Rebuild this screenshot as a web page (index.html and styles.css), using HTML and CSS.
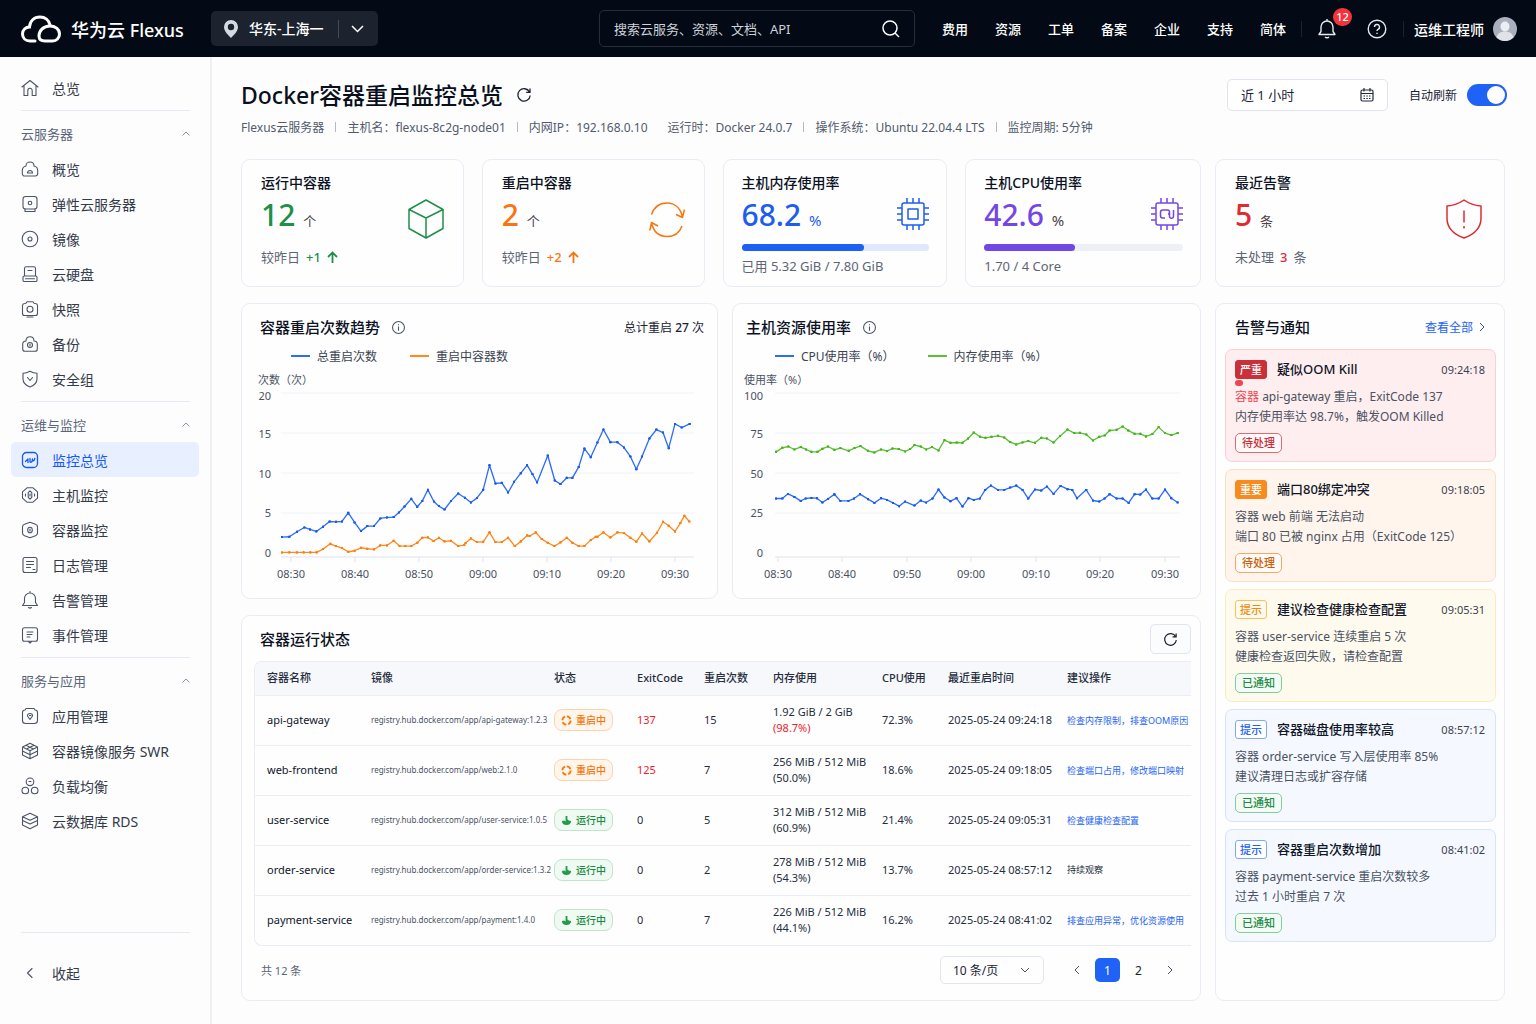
FILE: index.html
```html
<!DOCTYPE html>
<html lang="zh-CN">
<head>
    <meta charset="UTF-8">
    <meta name="viewport" content="width=device-width, initial-scale=1.0">
    <title>Docker容器重启监控总览 - 华为云 Flexus</title>
    <link rel="stylesheet" href="styles.css">
</head>
<body>
    <header class="topbar">
        <a class="brand" href="#">
            <svg width="40" height="28" viewBox="0 0 40 28" fill="none" stroke="#fff" stroke-width="3" stroke-linecap="round">
                <path d="M14 26H9C4.500 26 1.500 23 1.500 19s3-7 7-7C9 6 13 2 19 2c5 0 9 3 10 8"/>
                <path d="M24 26c-4 0-6-2-6-5 0-5 4-10 11-10 5 0 9.500 3 9.500 8 0 4-3 7-7 7z"/>
            </svg>
            <span>华为云 Flexus</span>
        </a>

        <div class="region">
            <svg width="14" height="18" viewBox="0 0 14 18"><path fill="#d5d9e2" fill-rule="evenodd" d="M7 0a7 7 0 0 1 7 7c0 4-4 8-7 11C4 15 0 11 0 7a7 7 0 0 1 7-7zm0 3.800a3.200 3.200 0 1 0 0 6.400 3.200 3.200 0 0 0 0-6.400z"/></svg>
            <select aria-label="区域">
                <option>华东-上海一</option>
            </select>
            <span class="region-line"></span>
            <svg width="13" height="8" viewBox="0 0 13 8" fill="none" stroke="#fff" stroke-width="1.500"><path d="M1 1l5.500 5.500L12 1"/></svg>
        </div>

        <div class="search">
            <input type="text" placeholder="搜索云服务、资源、文档、API" aria-label="搜索">
            <button type="button" aria-label="搜索">
                <svg width="18" height="18" viewBox="0 0 18 18" fill="none" stroke="#fff" stroke-width="1.500"><circle cx="8" cy="8" r="7"/><path d="M13 13l4 4"/></svg>
            </button>
        </div>

        <nav class="topnav">
            <a href="#">费用</a>
            <a href="#">资源</a>
            <a href="#">工单</a>
            <a href="#">备案</a>
            <a href="#">企业</a>
            <a href="#">支持</a>
            <a href="#">简体</a>
        </nav>

        <span class="top-line"></span>
        <button class="icon-btn bell" type="button" aria-label="消息">
            <svg width="18" height="20" viewBox="0 0 18 20" fill="none" stroke="#e6e8ee" stroke-width="1.400" stroke-linejoin="round"><path d="M1 15.500l2-3V8a6 6 0 0 1 12 0v4.500l2 3zM7 18c1 1 3 1 4 0M9 0v2"/></svg>
            <span class="count">12</span>
        </button>
        <button class="icon-btn help" type="button" aria-label="帮助">
            <svg width="20" height="20" viewBox="0 0 20 20" fill="none" stroke="#e6e8ee" stroke-width="1.400"><circle cx="10" cy="10" r="8.800"/><path d="M7.500 8a2.500 2.500 0 1 1 3.500 2.300c-.7.300-1 .7-1 1.700"/><path d="M10 13.800v1.300"/></svg>
        </button>
        <span class="top-line"></span>
        <a class="user" href="#">
            运维工程师
            <svg width="24" height="24" viewBox="0 0 24 24"><circle cx="12" cy="12" r="12" fill="#a9afbd"/><ellipse cx="12" cy="9.500" rx="4.500" ry="5" fill="#eceef3"/><path d="M3.500 20.500c1-4 4-6 8.500-6s7.500 2 8.500 6A12 12 0 0 1 12 24a12 12 0 0 1-8.500-3.500z" fill="#dfe2e9"/></svg>
        </a>
    </header>

    <div class="layout">
        <aside class="sidebar">
            <a class="item" href="#">
                <svg viewBox="0 0 18 18"><path d="M1 8l8-6.500L17 8M3 6.800V16.500h3.800v-5a2.200 2.200 0 0 1 4.400 0v5H15V6.800"/></svg>
                总览
            </a>
            <hr>
            <button class="group" type="button">云服务器 <svg viewBox="0 0 8 5"><path d="M.5 4.500L4 1l3.500 3.500"/></svg></button>
            <a class="item" href="#">
                <svg viewBox="0 0 18 18"><path d="M5 6c0-2.500 1.700-4 4-4s4 1.500 4 4c2.500.5 3.700 2 3.700 4.500v3c0 1.500-1 2.500-2.500 2.500H3.800c-1.500 0-2.500-1-2.500-2.500v-3C1.300 8 2.500 6.500 5 6zM6.500 13a2.500 2.500 0 1 1 5 0z"/></svg>
                概览
            </a>
            <a class="item" href="#">
                <svg viewBox="0 0 18 18"><rect x="2" y="1.500" width="14" height="12.500" rx="2.500"/><circle cx="9" cy="8" r="1.800"/><path d="M4 14v2.500h10V14"/></svg>
                弹性云服务器
            </a>
            <a class="item" href="#">
                <svg viewBox="0 0 18 18"><circle cx="9" cy="9" r="7.800"/><circle cx="9" cy="9" r="2"/></svg>
                镜像
            </a>
            <a class="item" href="#">
                <svg viewBox="0 0 18 18"><path d="M3.500 11V3.500c0-1 .6-1.700 1.700-1.700h7.600c1.100 0 1.700.7 1.700 1.700V11M2 12.300c0-.8.500-1.300 1.300-1.300h11.400c.8 0 1.300.5 1.300 1.300v2.900c0 .8-.5 1.300-1.300 1.300H3.300c-.8 0-1.300-.5-1.300-1.300zM7 5.500h4M4.500 13.800h9"/></svg>
                云硬盘
            </a>
            <a class="item" href="#">
                <svg viewBox="0 0 18 18"><path d="M1.500 5.500c0-1.200.7-1.800 2-2l1.500-.3 1-1.400h6l1 1.400 1.500.3c1.300.2 2 .8 2 2v8c0 1.300-.8 2-2 2h-11c-1.200 0-2-.7-2-2zM6 17h6"/><circle cx="9" cy="9.300" r="3"/></svg>
                快照
            </a>
            <a class="item" href="#">
                <svg viewBox="0 0 18 18"><path d="M5 6c0-2.700 1.700-4.300 4-4.300s4 1.600 4 4.300c2 .2 3.300 1.200 3.300 3v5c0 1.500-.8 2.300-2.300 2.300H4c-1.500 0-2.300-.8-2.300-2.300V9C1.700 7.200 3 6.200 5 6z"/><circle cx="9" cy="10" r="2.500"/><path d="M9 9v2"/></svg>
                备份
            </a>
            <a class="item" href="#">
                <svg viewBox="0 0 18 18"><path d="M9 1.300c2.500 1.400 4.700 2 7 2V9c0 4-3 6.500-7 8-4-1.500-7-4-7-8V3.300c2.300 0 4.500-.6 7-2zM6.500 7.500L9 10.500l2.500-3"/></svg>
                安全组
            </a>
            <hr>
            <button class="group" type="button">运维与监控 <svg viewBox="0 0 8 5"><path d="M.5 4.500L4 1l3.500 3.500"/></svg></button>
            <a class="item active" href="#">
                <svg viewBox="0 0 18 18"><rect x="1.500" y="1.500" width="15" height="15" rx="4"/><path d="M4.500 10.500L7 8v3.500M9 11V7.500M9 11c1.500.8 2.500-.5 2.300-2.500M11.500 8c0 3 1.800 2 2.300-.5"/></svg>
                监控总览
            </a>
            <a class="item" href="#">
                <svg viewBox="0 0 18 18"><path d="M6 1.800h6l4.500 4v6.400l-4.500 4H6l-4.500-4V5.800z"/><path d="M9 4.800l1.800 1.900v4.600L9 13.200l-1.800-1.900V6.700zM4.500 8v2M13.500 8v2M9 8v2"/></svg>
                主机监控
            </a>
            <a class="item" href="#">
                <svg viewBox="0 0 18 18"><path d="M9 1.300l5.500 2c1.500.5 2 1.200 2 2.700v6c0 1.500-.5 2.200-2 2.700L9 16.700l-5.500-2c-1.500-.5-2-1.200-2-2.700V6c0-1.500.5-2.200 2-2.700z"/><ellipse cx="9" cy="9" rx="2.300" ry="2.800"/><path d="M9 8v2"/></svg>
                容器监控
            </a>
            <a class="item" href="#">
                <svg viewBox="0 0 18 18"><rect x="2" y="1.500" width="14" height="15" rx="2"/><path d="M5.500 5.500h7M5.500 8.500h7M5.500 11.500h4M12 13.500h2"/></svg>
                日志管理
            </a>
            <a class="item" href="#">
                <svg viewBox="0 0 18 18"><path d="M1.500 14.500l2-3V7.500a5.500 5.500 0 0 1 11 0v4l2 3zM7.500 16.500c1 .8 2 .8 3 0M9 .5V2"/></svg>
                告警管理
            </a>
            <a class="item" href="#">
                <svg viewBox="0 0 18 18"><rect x="1.500" y="1.800" width="15" height="13.500" rx="2"/><path d="M6 6h6M6 8.500h5M6 11h3M7.500 15.500L9 17l1.500-1.500"/></svg>
                事件管理
            </a>
            <hr>
            <button class="group" type="button">服务与应用 <svg viewBox="0 0 8 5"><path d="M.5 4.500L4 1l3.500 3.500"/></svg></button>
            <a class="item" href="#">
                <svg viewBox="0 0 18 18"><path d="M5 1.500h8l1 1.500c1.700 0 2.500.8 2.500 2.500v8c0 2-1 3-3 3h-9c-2 0-3-1-3-3v-8C1.500 3.800 2.300 3 4 3z"/><path d="M9 12.500L6.500 9c-.3-1.700 1-2.500 2.500-2.500s2.800.8 2.500 2.500zM8.500 8.500h1.500"/></svg>
                应用管理
            </a>
            <a class="item" href="#">
                <svg viewBox="0 0 18 18"><path d="M9 1.300l7.500 3.700v8L9 16.700 1.500 13V5zM1.500 5L9 8.700 16.500 5M9 8.700v8M1.500 9L9 12.700 16.500 9M5 3.200l7.500 3.700M13 3.200L5.500 6.900"/></svg>
                容器镜像服务 SWR
            </a>
            <a class="item" href="#">
                <svg viewBox="0 0 18 18"><circle cx="9" cy="4.800" r="3.800"/><circle cx="4.300" cy="13.500" r="3.300"/><circle cx="13.700" cy="13.500" r="3.300"/><path d="M8 4.500h2"/></svg>
                负载均衡
            </a>
            <a class="item" href="#">
                <svg viewBox="0 0 18 18"><path d="M9 1.300l7.500 3.500L9 8.300 1.500 4.800zM1.500 4.800v3.700L9 12l7.500-3.500V4.800M1.500 9v4L9 16.700l7.500-3.700V9"/></svg>
                云数据库 RDS
            </a>
            <hr class="last">
            <button class="item collapse" type="button">
                <svg viewBox="0 0 18 18"><path d="M11 4.500L6.500 9l4.500 4.500"/></svg>
                收起
            </button>
        </aside>

        <main class="content">
            <div class="page-head">
                <h1>Docker容器重启监控总览</h1>
                <button class="icon-btn refresh" type="button" aria-label="刷新">
                    <svg width="16" height="16" viewBox="0 0 16 16"><path d="M13.500 5A6.200 6.200 0 1 0 14.200 8.500M14 1.500V5.300h-3.800"/></svg>
                </button>
                <div class="range">
                    <select aria-label="时间范围">
                        <option>近 1 小时</option>
                    </select>
                    <svg width="14" height="14" viewBox="0 0 14 14" fill="none" stroke="#222b3a" stroke-width="1.200"><rect x="1" y="2" width="12" height="11" rx="1.500"/><path d="M1 5.500h12M4 0v3.500M10 0v3.500M3.500 8h1.500M6.300 8h1.500M9 8h1.500M3.500 10.500h1.500M6.300 10.500h1.500M9 10.500h1.500"/></svg>
                </div>
                <label class="auto" for="autoRefresh">自动刷新</label>
                <input class="switch" type="checkbox" id="autoRefresh" checked>
            </div>

            <ul class="meta">
                <li>Flexus云服务器</li>
                <li>主机名：flexus-8c2g-node01</li>
                <li>内网IP：192.168.0.10</li>
                <li class="plain">运行时：Docker 24.0.7</li>
                <li>操作系统：Ubuntu 22.04.4 LTS</li>
                <li>监控周期: 5分钟</li>
            </ul>

            <div class="dashboard">
                <div class="left">
                    <div class="stats">
                        <section class="card stat green">
                            <h3>运行中容器</h3>
                            <p class="value">12 <small>个</small></p>
                            <p class="sub">较昨日 <b>+1</b> <svg width="11" height="12" viewBox="0 0 11 12"><path d="M5.500 12V1.500M1 6l4.500-4.500L10 6"/></svg></p>
                            <svg class="stat-icon" width="36" height="40" viewBox="0 0 36 40"><path d="M18 1l17 9.500v19L18 39 1 29.500v-19zM1 10.500L18 19l17-8.500M18 19v20"/></svg>
                        </section>
                        <section class="card stat orange">
                            <h3>重启中容器</h3>
                            <p class="value">2 <small>个</small></p>
                            <p class="sub">较昨日 <b>+2</b> <svg width="11" height="12" viewBox="0 0 11 12"><path d="M5.500 12V1.500M1 6l4.500-4.500L10 6"/></svg></p>
                            <svg class="stat-icon" width="36" height="40" viewBox="0 0 36 40"><path d="M2.500 15.500C5 8 11 4 18 4c7.500 0 13.500 5 15.500 14M27 15.500l6.500 3 2-8M33 27c-2.500 7-8 10.500-15 10.500C10 37.500 4.500 32.500 2.500 24M9 27l-6.500-3.500L.8 31.500"/></svg>
                        </section>
                        <section class="card stat blue has-bar">
                            <h3>主机内存使用率</h3>
                            <p class="value">68.2 <small>%</small></p>
                            <div class="bar"><div class="fill" style="width: 65.5%"></div></div>
                            <p class="sub">已用 5.32 GiB / 7.80 GiB</p>
                            <svg class="stat-icon" width="32" height="32" viewBox="0 0 32 32"><rect x="5" y="5" width="22" height="22" rx="2"/><rect x="11" y="11" width="10" height="10"/><path d="M10 5V0M16 5V0M22 5V0M10 32v-5M16 32v-5M22 32v-5M5 10H0M5 16H0M5 22H0M32 10h-5M32 16h-5M32 22h-5"/></svg>
                        </section>
                        <section class="card stat purple has-bar">
                            <h3>主机CPU使用率</h3>
                            <p class="value">42.6 <small>%</small></p>
                            <div class="bar"><div class="fill" style="width: 45.5%"></div></div>
                            <p class="sub">1.70 / 4 Core</p>
                            <svg class="stat-icon" width="32" height="32" viewBox="0 0 32 32"><rect x="5" y="5" width="22" height="22" rx="2"/><path d="M10 5V0M16 5V0M22 5V0M10 32v-5M16 32v-5M22 32v-5M5 10H0M5 16H0M5 22H0M32 10h-5M32 16h-5M32 22h-5"/><path d="M14 12h-2.500c-1.500 0-2 1-2 2.500v3c0 1.500.5 2.500 2 2.500H14M14 12h2.500c1.500 0 2 1 2 2s-.5 2-1.500 2M18.500 14v4c0 1.500.8 2.300 2 2.300s2-.8 2-2.300v-6"/></svg>
                        </section>
                    </div>

                    <div class="charts">
                        <section class="card chart">
                            <div class="chart-head">
                                <h2>容器重启次数趋势</h2>
                                <svg class="info" width="13" height="13" viewBox="0 0 12 12"><circle cx="6" cy="6" r="5.500"/><path d="M6 5v4M6 3v1"/></svg>
                                <span class="total">总计重启 <b>27</b> 次</span>
                            </div>
                            <div class="legend">
                                <span class="c-blue">总重启次数</span>
                                <span class="c-orange">重启中容器数</span>
                            </div>
                            <svg class="graph" viewBox="0 0 475 228">
                                <defs>
                                    <marker id="dotBlue" viewBox="0 0 4 4" refX="2" refY="2" markerWidth="2" markerHeight="2"><circle cx="2" cy="2" r="2" fill="#1659f5"/></marker>
                                    <marker id="dotOrange" viewBox="0 0 4 4" refX="2" refY="2" markerWidth="2" markerHeight="2"><circle cx="2" cy="2" r="2" fill="#ff7f0e"/></marker>
                                    <marker id="dotGreen" viewBox="0 0 4 4" refX="2" refY="2" markerWidth="2" markerHeight="2"><circle cx="2" cy="2" r="2" fill="#46b41e"/></marker>
                                </defs>
                                <text x="16" y="14">次数（次）</text>
                                <path class="grid" d="M39 23h413M39 63h413M39 103h413M39 143h413"/>
                                <path class="axis" d="M39 187h413M49 187v5M113 187v5M177 187v5M241 187v5M305 187v5M369 187v5M433 187v5"/>
                                <g class="y-labels">
                                    <text x="29" y="30">20</text>
                                    <text x="29" y="68">15</text>
                                    <text x="29" y="108">10</text>
                                    <text x="29" y="147">5</text>
                                    <text x="29" y="187">0</text>
                                </g>
                                <g class="x-labels">
                                    <text x="49" y="208">08:30</text>
                                    <text x="113" y="208">08:40</text>
                                    <text x="177" y="208">08:50</text>
                                    <text x="241" y="208">09:00</text>
                                    <text x="305" y="208">09:10</text>
                                    <text x="369" y="208">09:20</text>
                                    <text x="433" y="208">09:30</text>
                                </g>
                                <svg x="39" y="23" width="413" height="164" viewBox="138 279 1240 491" overflow="visible">
                                    <polyline class="line s-blue" points="141,711 163,710 186,695 208,682 225,688 244,694 264,680 284,664 303,665 321,664 340,638 359,667 378,693 397,678 417,678 436,655 456,652 476,651 492,637 509,619 529,596 547,620 562,603 579,569 597,604 612,618 629,628 648,603 670,580 690,593 708,607 726,594 745,569 764,495 782,550 801,548 820,577 838,545 858,519 877,495 893,522 907,547 939,466 960,541 977,552 996,533 1013,533 1032,500 1049,445 1068,471 1088,427 1106,388 1127,426 1148,426 1168,442 1187,469 1205,507 1222,469 1244,415 1265,388 1285,397 1302,444 1321,371 1341,382 1365,371"/>
                                    <polyline class="line s-orange" points="141,757 163,757 186,757 206,757 226,757 245,757 264,747 286,731 303,738 321,744 340,755 359,752 378,743 397,746 417,748 436,736 456,736 476,722 494,738 511,738 529,738 547,728 562,713 579,712 596,723 612,713 629,724 648,722 670,738 688,735 692,729 708,715 726,726 745,725 764,697 782,726 801,726 820,713 840,738 858,724 877,706 884,708 903,697 921,717 939,728 959,738 977,727 996,713 1013,728 1032,738 1049,738 1068,720 1083,710 1088,710 1106,697 1127,712 1148,697 1168,699 1187,713 1205,725 1222,700 1244,724 1267,698 1285,665 1302,677 1321,694 1337,669 1349,647 1364,664"/>
                                </svg>
                            </svg>
                        </section>

                        <section class="card chart">
                            <div class="chart-head">
                                <h2>主机资源使用率</h2>
                                <svg class="info" width="13" height="13" viewBox="0 0 12 12"><circle cx="6" cy="6" r="5.500"/><path d="M6 5v4M6 3v1"/></svg>
                            </div>
                            <div class="legend">
                                <span class="c-blue">CPU使用率（%）</span>
                                <span class="c-green">内存使用率（%）</span>
                            </div>
                            <svg class="graph" viewBox="0 0 467 224">
                                <text x="11" y="14">使用率（%）</text>
                                <path class="grid" d="M42 23h405M42 63h405M42 103h405M42 143h405"/>
                                <path class="axis" d="M42 187h405M45 187v5M109 187v5M174 187v5M238 187v5M303 187v5M367 187v5M432 187v5"/>
                                <g class="y-labels">
                                    <text x="30" y="30">100</text>
                                    <text x="30" y="68">75</text>
                                    <text x="30" y="108">50</text>
                                    <text x="30" y="147">25</text>
                                    <text x="30" y="187">0</text>
                                </g>
                                <g class="x-labels">
                                    <text x="45" y="208">08:30</text>
                                    <text x="109" y="208">08:40</text>
                                    <text x="174" y="208">09:50</text>
                                    <text x="238" y="208">09:00</text>
                                    <text x="303" y="208">09:10</text>
                                    <text x="367" y="208">09:20</text>
                                    <text x="432" y="208">09:30</text>
                                </g>
                                <svg x="42" y="23" width="405" height="164" viewBox="150 279 1214 491" overflow="visible">
                                    <polyline class="line s-green" points="153,455 172,443 190,439 208,448 227,441 243,448 259,455 277,455 292,446 309,439 328,449 346,444 371,452 388,444 406,438 429,452 448,457 468,448 486,453 502,445 521,447 540,454 555,447 568,435 587,439 603,448 621,441 640,451 658,420 676,428 695,427 712,428 729,415 746,397 765,410 781,413 799,410 818,407 837,412 855,426 873,433 892,427 909,423 929,428 948,413 965,415 985,427 1004,408 1027,388 1047,399 1064,398 1083,403 1103,421 1122,410 1138,406 1153,391 1174,389 1192,379 1209,391 1228,401 1245,401 1262,409 1281,402 1300,381 1319,399 1338,405 1357,399"/>
                                    <polyline class="line s-blue" points="153,595 172,595 189,581 208,590 227,602 242,595 259,593 276,594 292,607 309,596 328,582 346,602 370,602 387,595 405,582 429,597 448,608 468,594 486,599 504,608 522,618 540,604 568,616 587,601 603,607 622,595 640,568 658,592 676,603 694,594 712,619 730,594 746,599 764,595 780,569 797,556 818,569 837,569 855,562 873,556 892,569 909,595 929,568 948,571 965,559 985,581 1006,557 1027,567 1041,569 1055,594 1083,569 1103,601 1122,604 1138,595 1153,582 1174,595 1192,595 1210,608 1228,582 1245,583 1262,568 1281,595 1300,595 1319,568 1338,594 1357,607"/>
                                </svg>
                            </svg>
                        </section>
                    </div>

                    <section class="card containers">
                        <div class="table-head">
                            <h2>容器运行状态</h2>
                            <button class="box-btn refresh" type="button" aria-label="刷新">
                                <svg width="15" height="15" viewBox="0 0 16 16"><path d="M13.500 5A6.200 6.200 0 1 0 14.200 8.500M14 1.500V5.300h-3.800"/></svg>
                            </button>
                        </div>
                        <div class="table-wrap">
                            <table>
                                <thead>
                                    <tr>
                                        <th class="w-name">容器名称</th>
                                        <th>镜像</th>
                                        <th class="w-state">状态</th>
                                        <th class="w-exit">ExitCode</th>
                                        <th class="w-times">重启次数</th>
                                        <th class="w-mem">内存使用</th>
                                        <th class="w-cpu">CPU使用</th>
                                        <th class="w-last">最近重启时间</th>
                                        <th class="w-action">建议操作</th>
                                    </tr>
                                </thead>
                                <tbody>
                                    <tr>
                                        <td class="name">api-gateway</td>
                                        <td class="image">registry.hub.docker.com/app/api-gateway:1.2.3</td>
                                        <td><span class="state restarting"><svg width="11" height="11" viewBox="0 0 12 12"><circle cx="6" cy="6" r="4.500"/></svg>重启中</span></td>
                                        <td class="red">137</td>
                                        <td>15</td>
                                        <td>1.92 GiB / 2 GiB<br><span class="red">(98.7%)</span></td>
                                        <td>72.3%</td>
                                        <td>2025-05-24 09:24:18</td>
                                        <td><a href="#">检查内存限制，排查OOM原因</a></td>
                                    </tr>
                                    <tr>
                                        <td class="name">web-frontend</td>
                                        <td class="image">registry.hub.docker.com/app/web:2.1.0</td>
                                        <td><span class="state restarting"><svg width="11" height="11" viewBox="0 0 12 12"><circle cx="6" cy="6" r="4.500"/></svg>重启中</span></td>
                                        <td class="red">125</td>
                                        <td>7</td>
                                        <td>256 MiB / 512 MiB<br>(50.0%)</td>
                                        <td>18.6%</td>
                                        <td>2025-05-24 09:18:05</td>
                                        <td><a href="#">检查端口占用，修改端口映射</a></td>
                                    </tr>
                                    <tr>
                                        <td class="name">user-service</td>
                                        <td class="image">registry.hub.docker.com/app/user-service:1.0.5</td>
                                        <td><span class="state running"><svg width="11" height="11" viewBox="0 0 12 12"><path d="M5 1h2v4l1.500 1 2.500.5c0 3-2 4.500-5 4.500S1 9.500 1 6.500L3.500 6 5 7z"/></svg>运行中</span></td>
                                        <td>0</td>
                                        <td>5</td>
                                        <td>312 MiB / 512 MiB<br>(60.9%)</td>
                                        <td>21.4%</td>
                                        <td>2025-05-24 09:05:31</td>
                                        <td><a href="#">检查健康检查配置</a></td>
                                    </tr>
                                    <tr>
                                        <td class="name">order-service</td>
                                        <td class="image">registry.hub.docker.com/app/order-service:1.3.2</td>
                                        <td><span class="state running"><svg width="11" height="11" viewBox="0 0 12 12"><path d="M5 1h2v4l1.500 1 2.500.5c0 3-2 4.500-5 4.500S1 9.500 1 6.500L3.500 6 5 7z"/></svg>运行中</span></td>
                                        <td>0</td>
                                        <td>2</td>
                                        <td>278 MiB / 512 MiB<br>(54.3%)</td>
                                        <td>13.7%</td>
                                        <td>2025-05-24 08:57:12</td>
                                        <td class="watch">持续观察</td>
                                    </tr>
                                    <tr>
                                        <td class="name">payment-service</td>
                                        <td class="image">registry.hub.docker.com/app/payment:1.4.0</td>
                                        <td><span class="state running"><svg width="11" height="11" viewBox="0 0 12 12"><path d="M5 1h2v4l1.500 1 2.500.5c0 3-2 4.500-5 4.500S1 9.500 1 6.500L3.500 6 5 7z"/></svg>运行中</span></td>
                                        <td>0</td>
                                        <td>7</td>
                                        <td>226 MiB / 512 MiB<br>(44.1%)</td>
                                        <td>16.2%</td>
                                        <td>2025-05-24 08:41:02</td>
                                        <td><a href="#">排查应用异常，优化资源使用</a></td>
                                    </tr>
                                </tbody>
                            </table>
                        </div>
                        <div class="pager">
                            <span class="pager-total">共 12 条</span>
                            <div class="page-size">
                                <select aria-label="每页条数">
                                    <option>10 条/页</option>
                                </select>
                                <svg width="10" height="6" viewBox="0 0 10 6"><path d="M1 1l4 4 4-4"/></svg>
                            </div>
                            <button type="button" aria-label="上一页"><svg width="6" height="10" viewBox="0 0 6 10"><path d="M5 1L1 5l4 4"/></svg></button>
                            <button class="current" type="button">1</button>
                            <button type="button">2</button>
                            <button type="button" aria-label="下一页"><svg width="6" height="10" viewBox="0 0 6 10"><path d="M1 1l4 4-4 4"/></svg></button>
                        </div>
                    </section>
                </div>

                <div class="right">
                    <section class="card stat redcard">
                        <h3>最近告警</h3>
                        <p class="value">5 <small>条</small></p>
                        <p class="sub">未处理 <b>3</b> 条</p>
                        <svg class="stat-icon" width="36" height="40" viewBox="0 0 36 40"><path d="M18 1c5 3.500 11 5.500 17 6v12c0 10-7 16.500-17 20C8 35.500 1 29 1 19V7c6-.5 12-2.500 17-6zM18 11.500v12"/><path d="M18 27v2.500"/></svg>
                    </section>

                    <section class="card alerts">
                        <div class="alerts-head">
                            <h2>告警与通知</h2>
                            <a href="#">查看全部 <svg width="6" height="10" viewBox="0 0 6 10"><path d="M1 1l4 4-4 4"/></svg></a>
                        </div>
                        <article class="alert critical">
                            <div class="alert-top"><span class="tag">严重</span><h3>疑似OOM Kill</h3><time>09:24:18</time></div>
                            <p><span class="hot">容器</span> api-gateway 重启，ExitCode 137<br>内存使用率达 98.7%，触发OOM Killed</p>
                            <span class="todo">待处理</span>
                        </article>
                        <article class="alert major">
                            <div class="alert-top"><span class="tag">重要</span><h3>端口80绑定冲突</h3><time>09:18:05</time></div>
                            <p>容器 web 前端 无法启动<br>端口 80 已被 nginx 占用（ExitCode 125）</p>
                            <span class="todo">待处理</span>
                        </article>
                        <article class="alert minor">
                            <div class="alert-top"><span class="tag">提示</span><h3>建议检查健康检查配置</h3><time>09:05:31</time></div>
                            <p>容器 user-service 连续重启 5 次<br>健康检查返回失败，请检查配置</p>
                            <span class="todo done">已通知</span>
                        </article>
                        <article class="alert notice">
                            <div class="alert-top"><span class="tag">提示</span><h3>容器磁盘使用率较高</h3><time>08:57:12</time></div>
                            <p>容器 order-service 写入层使用率 85%<br>建议清理日志或扩容存储</p>
                            <span class="todo done">已通知</span>
                        </article>
                        <article class="alert notice">
                            <div class="alert-top"><span class="tag">提示</span><h3>容器重启次数增加</h3><time>08:41:02</time></div>
                            <p>容器 payment-service 重启次数较多<br>过去 1 小时重启 7 次</p>
                            <span class="todo done">已通知</span>
                        </article>
                    </section>
                </div>
            </div>
        </main>
    </div>
</body>
</html>
```
FILE: styles.css
```css
* {
    box-sizing: border-box;
}
body {
    margin: 0;
    min-height: 100vh;
    display: flex;
    flex-direction: column;
    font-family: "Noto Sans", "Noto Sans CJK SC", sans-serif;
    font-size: 12px;
    color: #1b2333;
    background: #fdfdfe;
}
h1, h2, h3, p, ul {
    margin: 0;
    padding: 0;
}
a {
    color: inherit;
    text-decoration: none;
}
button, select, input {
    font: inherit;
    color: inherit;
}
button {
    padding: 0;
    border: none;
    background: none;
    cursor: pointer;
}
select {
    appearance: none;
    border: none;
    background: transparent;
    padding: 0;
    outline: none;
}
svg {
    display: block;
    flex: none;
}

/* top bar */
.topbar {
    height: 57px;
    display: flex;
    align-items: center;
    padding: 0 19px 0 21px;
    background: #030a15;
    color: #fff;
    font-size: 13px;
    font-weight: 500;
}
.brand {
    display: flex;
    align-items: center;
    gap: 10px;
    width: 190px;
    font-size: 18px;
    white-space: nowrap;
}
.region {
    display: flex;
    align-items: center;
    width: 167px;
    height: 35px;
    padding: 0 14px 0 13px;
    border-radius: 5px;
    background: #1c232f;
    font-size: 14px;
}
.region select {
    flex: 1;
    min-width: 0;
    margin-left: 11px;
}
.region option {
    color: #1b2333;
}
.region-line {
    width: 1px;
    height: 18px;
    margin-right: 12px;
    background: #444b57;
}
.search {
    display: flex;
    align-items: center;
    width: 316px;
    height: 37px;
    margin-left: auto;
    padding: 0 14px;
    border: 1px solid #262e3a;
    border-radius: 5px;
    font-weight: 400;
}
.search input {
    flex: 1;
    min-width: 0;
    padding: 0;
    border: none;
    outline: none;
    background: transparent;
}
.search input::placeholder {
    color: #ccd1da;
    opacity: 1;
}
.topnav {
    display: flex;
    gap: 27px;
    margin: 0 15px 0 27px;
}
.top-line {
    width: 1px;
    height: 16px;
    background: #1b2330;
}
.bell {
    position: relative;
    margin: 0 31px 0 16px;
}
.count {
    position: absolute;
    top: -11px;
    left: 15px;
    width: 19px;
    border-radius: 9px;
    background: #f5333a;
    font-size: 11px;
    line-height: 18px;
    text-align: center;
}
.help {
    margin-right: 16px;
}
.user {
    display: flex;
    align-items: center;
    gap: 9px;
    margin-left: 10px;
    font-size: 14px;
}

/* sidebar */
.layout {
    flex: 1;
    display: flex;
}
.sidebar {
    width: 212px;
    flex: none;
    display: flex;
    flex-direction: column;
    padding: 13px 11px 34px 11px;
    border-right: 2px solid #edf0f6;
}
.item {
    display: flex;
    align-items: center;
    gap: 13px;
    height: 35px;
    padding-left: 10px;
    border-radius: 5px;
    font-size: 14px;
    color: #333a48;
}
.item svg {
    width: 18px;
    height: 18px;
    fill: none;
    stroke: #4c5464;
    stroke-width: 1.1;
    stroke-linecap: round;
    stroke-linejoin: round;
}
.item.active {
    background: #e8effe;
    color: #1659f5;
}
.item.active svg {
    stroke: #1659f5;
    stroke-width: 1.3;
}
.sidebar hr {
    width: 169px;
    margin: 5px 10px;
    border: none;
    border-top: 1px solid #e5e9f2;
}
.sidebar hr.last {
    margin-top: auto;
    margin-bottom: 22px;
}
.group {
    display: flex;
    align-items: center;
    justify-content: space-between;
    height: 35px;
    padding: 0 9px 0 10px;
    font-size: 13px;
    color: #5b6578;
}
.group svg {
    width: 8px;
    height: 5px;
    fill: none;
    stroke: #8a93a5;
}

/* page head */
.content {
    flex: 1;
    min-width: 0;
    display: flex;
    flex-direction: column;
    padding: 21px 29px 23px;
}
.page-head {
    display: flex;
    align-items: center;
    height: 34px;
}
h1 {
    margin-right: 13px;
    font-size: 23px;
    font-weight: 500;
    line-height: 34px;
    color: #0a0f1c;
}
.refresh svg {
    fill: none;
    stroke: #1b2333;
    stroke-width: 1.3;
}
.range {
    display: flex;
    align-items: center;
    width: 161px;
    height: 32px;
    margin-left: auto;
    padding: 0 13px;
    border: 1px solid #dfe4ee;
    border-radius: 5px;
    background: #fff;
}
.range select {
    flex: 1;
    font-size: 13px;
}
.auto {
    margin: 0 10px 0 21px;
}
.switch {
    appearance: none;
    width: 40px;
    height: 22px;
    margin: 0;
    padding: 2px;
    border-radius: 11px;
    background: #1f62f6;
    display: flex;
    justify-content: flex-end;
}
.switch::before {
    content: "";
    width: 18px;
    height: 18px;
    border-radius: 50%;
    background: #fff;
}
.switch:not(:checked) {
    justify-content: flex-start;
    background: #b8bfcc;
}
.meta {
    display: flex;
    margin-top: 6px;
    list-style: none;
    line-height: 20px;
    color: #525b6b;
    white-space: nowrap;
}
.meta li + li::before {
    content: "";
    display: inline-block;
    width: 1px;
    height: 10px;
    margin: 0 11px;
    background: #b3bac7;
}
.meta li.plain::before {
    width: 0;
    margin: 0 10px;
}

/* cards */
.dashboard {
    flex: 1;
    display: flex;
    gap: 14px;
    margin: 21px 2px 0 0;
}
.left {
    flex: 1;
    min-width: 0;
    display: flex;
    flex-direction: column;
    gap: 16px;
}
.right {
    width: 290px;
    flex: none;
    display: flex;
    flex-direction: column;
    gap: 16px;
}
.card {
    border: 1px solid #e9ecf3;
    border-radius: 9px;
    background: #fefeff;
}
h2 {
    font-size: 15px;
    font-weight: 500;
    line-height: 24px;
    color: #0c121f;
}
.stats {
    display: grid;
    grid-template-columns: 223fr 223fr 225fr 236fr;
    gap: 18px;
}
.stat {
    height: 128px;
    display: grid;
    grid-template-columns: 1fr auto;
    grid-template-rows: 20px 44px 1fr;
    padding: 13px 19px 0 19px;
}
.stat h3 {
    grid-column: 1 / 3;
    font-size: 14px;
    font-weight: 500;
    line-height: 20px;
    color: #0c121f;
}
.value {
    font-size: 30px;
    font-weight: 500;
    line-height: 44px;
    white-space: nowrap;
}
.value small {
    font-size: 13px;
    font-weight: 400;
    color: #4c4248;
}
.sub {
    grid-column: 1;
    align-self: start;
    display: flex;
    align-items: center;
    gap: 6px;
    margin-top: 10px;
    font-size: 13px;
    line-height: 20px;
    color: #5d6575;
}
.sub b {
    font-weight: 500;
}
.sub svg {
    fill: none;
    stroke-width: 1.8;
}
.stat-icon {
    grid-column: 2;
    grid-row: 2 / 4;
    margin-top: 6px;
    fill: none;
    stroke-width: 1.5;
    stroke-linejoin: round;
}
.has-bar {
    grid-template-rows: 20px 44px 14px 1fr;
    padding: 13px 17px 0 18px;
}
.has-bar .value small {
    font-size: 15px;
}
.has-bar .stat-icon {
    grid-row: 2;
    margin-top: 5px;
}
.has-bar .sub {
    grid-column: 1 / 3;
    margin-top: 5px;
}
.bar {
    grid-column: 1 / 3;
    align-self: end;
    height: 7px;
    border-radius: 4px;
    background: #dfe8fd;
}
.fill {
    height: 7px;
    border-radius: 4px;
    background: #1c60f5;
}
.purple .bar {
    background: #efeff6;
}
.purple .fill {
    background: #7347e3;
}
.green .value, .green b {
    color: #1f8f48;
}
.green svg {
    stroke: #1f8f48;
}
.orange .value, .orange b {
    color: #f9760e;
}
.orange svg {
    stroke: #f9760e;
}
.blue .value, .blue .value small {
    color: #1c5df0;
}
.blue svg {
    stroke: #1c5df0;
}
.purple .value {
    color: #7347e3;
}
.purple svg {
    stroke: #7347e3;
}
.redcard {
    padding-right: 22px;
}
.redcard .value, .redcard b {
    color: #e02b33;
}
.redcard svg {
    stroke: #e02b33;
}

/* charts */
.charts {
    display: grid;
    grid-template-columns: 477fr 469fr;
    gap: 14px;
}
.chart-head {
    display: flex;
    align-items: center;
    padding: 11px 13px 0 18px;
}
.info {
    margin-left: 12px;
    fill: none;
    stroke: #4c5464;
}
.total {
    margin-left: auto;
}
.total b {
    font-weight: 500;
}
.legend {
    display: flex;
    gap: 33px;
    height: 31px;
    padding-left: 49px;
    line-height: 36px;
    color: #3b4352;
}
.chart + .chart .chart-head {
    padding-left: 13px;
}
.chart + .chart .legend {
    padding-left: 42px;
}
.legend span::before {
    content: "";
    display: inline-block;
    width: 19px;
    height: 2px;
    margin-right: 7px;
    vertical-align: 4px;
    background: #2f6df7;
}
.legend .c-orange::before {
    background: #ff8a1f;
}
.legend .c-green::before {
    background: #5bbf35;
}
.graph {
    width: 100%;
    font-size: 11px;
    fill: #4a5262;
}
.grid, .axis {
    fill: none;
    stroke: #f0f2f6;
}
.axis {
    stroke: #dfe3ea;
}
.y-labels {
    text-anchor: end;
}
.x-labels {
    text-anchor: middle;
}
.line {
    fill: none;
    stroke-width: 4;
    stroke-linejoin: round;
}
.s-blue {
    stroke: #2f6df7;
    marker: url(#dotBlue);
}
.s-orange {
    stroke: #ff8a1f;
    marker: url(#dotOrange);
}
.s-green {
    stroke: #5bbf35;
    marker: url(#dotGreen);
}

/* containers table */
.containers {
    flex: 1;
    display: flex;
    flex-direction: column;
    padding: 8px 9px 16px 12px;
}
.table-head {
    display: flex;
    align-items: center;
    justify-content: space-between;
    margin-bottom: 7px;
    padding-left: 6px;
}
.box-btn {
    display: flex;
    align-items: center;
    justify-content: center;
    width: 41px;
    height: 30px;
    border: 1px solid #e1e5ee;
    border-radius: 5px;
    background: #fbfcfe;
}
.table-wrap {
    border: 1px solid #e9ecf3;
    border-right: none;
    border-radius: 8px 0 0 8px;
    overflow: hidden;
}
table {
    width: 100%;
    table-layout: fixed;
    border-collapse: collapse;
    font-size: 11px;
    line-height: 16px;
    white-space: nowrap;
    color: #262e3d;
}
th {
    height: 33px;
    padding: 0 0 0 12px;
    text-align: left;
    font-weight: 500;
    background: #f6f8fb;
}
td {
    height: 50px;
    padding: 0 0 0 12px;
    border-top: 1px solid #ebeef3;
}
.w-name {
    width: 104px;
}
.w-state {
    width: 83px;
}
.w-exit {
    width: 67px;
}
.w-times {
    width: 69px;
}
.w-mem {
    width: 109px;
}
.w-cpu {
    width: 66px;
}
.w-last {
    width: 119px;
}
.w-action {
    width: 136px;
}
.name {
    color: #10172a;
}
.image {
    font-size: 8px;
    color: #4a5262;
}
td a, .watch {
    font-size: 9px;
}
td a {
    color: #2463f2;
}
.red {
    color: #f0222c;
}
.state {
    display: inline-flex;
    align-items: center;
    gap: 4px;
    height: 22px;
    padding: 0 6px;
    border: 1px solid;
    border-radius: 8px;
    font-size: 10px;
    font-weight: 500;
}
.restarting {
    color: #f9760e;
    border-color: #fed3ab;
    background: #fff5eb;
}
.restarting svg {
    fill: none;
    stroke: #f9760e;
    stroke-width: 2;
    stroke-dasharray: 5 2;
}
.running {
    color: #1d8a44;
    border-color: #bfe6cb;
    background: #effaf2;
}
.running svg {
    fill: #25994c;
}
.pager {
    display: flex;
    align-items: center;
    margin-top: auto;
    padding: 0 9px 0 7px;
    font-size: 12px;
}
.pager-total {
    margin-right: auto;
    font-size: 11px;
    color: #5d6575;
}
.pager svg, .alerts-head svg {
    fill: none;
    stroke: #4c5464;
}
.page-size {
    display: flex;
    align-items: center;
    width: 104px;
    height: 28px;
    margin-right: 20px;
    padding: 0 13px 0 12px;
    border: 1px solid #e1e5ee;
    border-radius: 5px;
}
.page-size select {
    flex: 1;
}
.pager button {
    display: flex;
    align-items: center;
    justify-content: center;
    width: 25px;
    height: 24px;
    margin-left: 6px;
    border-radius: 5px;
}
.pager .page-size + button {
    margin-left: 0;
}
.pager .current {
    background: #1f62f6;
    color: #fff;
}

/* alerts */
.alerts {
    flex: 1;
    padding: 0 8px 0 9px;
}
.alerts-head {
    display: flex;
    align-items: center;
    justify-content: space-between;
    height: 45px;
    padding: 0 11px 0 10px;
}
.alerts-head a {
    display: flex;
    align-items: center;
    gap: 6px;
    color: #2463f2;
}
.alert {
    margin-bottom: 7px;
    padding: 10px 10px 8px 9px;
    border: 1px solid;
    border-radius: 7px;
}
.alert-top {
    display: flex;
    align-items: center;
}
.alert h3 {
    margin-left: 10px;
    font-size: 13px;
    font-weight: 500;
    line-height: 19px;
    color: #10172a;
}
.alert time {
    margin-left: auto;
    font-size: 11px;
    color: #3b4352;
}
.alert p {
    margin: 8px 0 6px;
    line-height: 20px;
    color: #4a5262;
    white-space: nowrap;
}
.tag {
    position: relative;
    width: 32px;
    border: 1px solid;
    border-radius: 3px;
    font-size: 11px;
    font-weight: 500;
    line-height: 17px;
    text-align: center;
}
.todo {
    display: block;
    width: 47px;
    border: 1px solid;
    border-radius: 5px;
    font-size: 11px;
    font-weight: 500;
    line-height: 18px;
    text-align: center;
}
.critical {
    border-color: #fbd0d3;
    background: #feeeef;
}
.critical .tag {
    border-color: #c9303a;
    background: #c9303a;
    color: #fff;
}
.critical .tag::after {
    content: "";
    position: absolute;
    left: -1px;
    bottom: -8px;
    width: 8px;
    height: 6px;
    border-radius: 3px;
    background: #ee4650;
}
.critical .hot {
    color: #ee4650;
}
.critical .todo {
    color: #c9303a;
    border-color: #df6a72;
    background: #fff8f8;
}
.major {
    border-color: #fddfc2;
    background: #fff5ec;
}
.major .tag {
    border-color: #f98a1d;
    background: #f98a1d;
    color: #fff;
}
.major .todo {
    color: #c8600c;
    border-color: #f2a866;
    background: #fffaf5;
}
.minor {
    border-color: #fdebc0;
    background: #fffaee;
}
.minor .tag {
    color: #f08a0c;
    border-color: #f8c15c;
    background: #fffaee;
}
.notice {
    border-color: #d5e3fc;
    background: #f5f9ff;
}
.notice .tag {
    color: #2463f2;
    border-color: #7fa8f8;
    background: #fff;
}
.alert .done {
    color: #1d8a44;
    border-color: #85cb9b;
    background: #f3fbf5;
}
```
